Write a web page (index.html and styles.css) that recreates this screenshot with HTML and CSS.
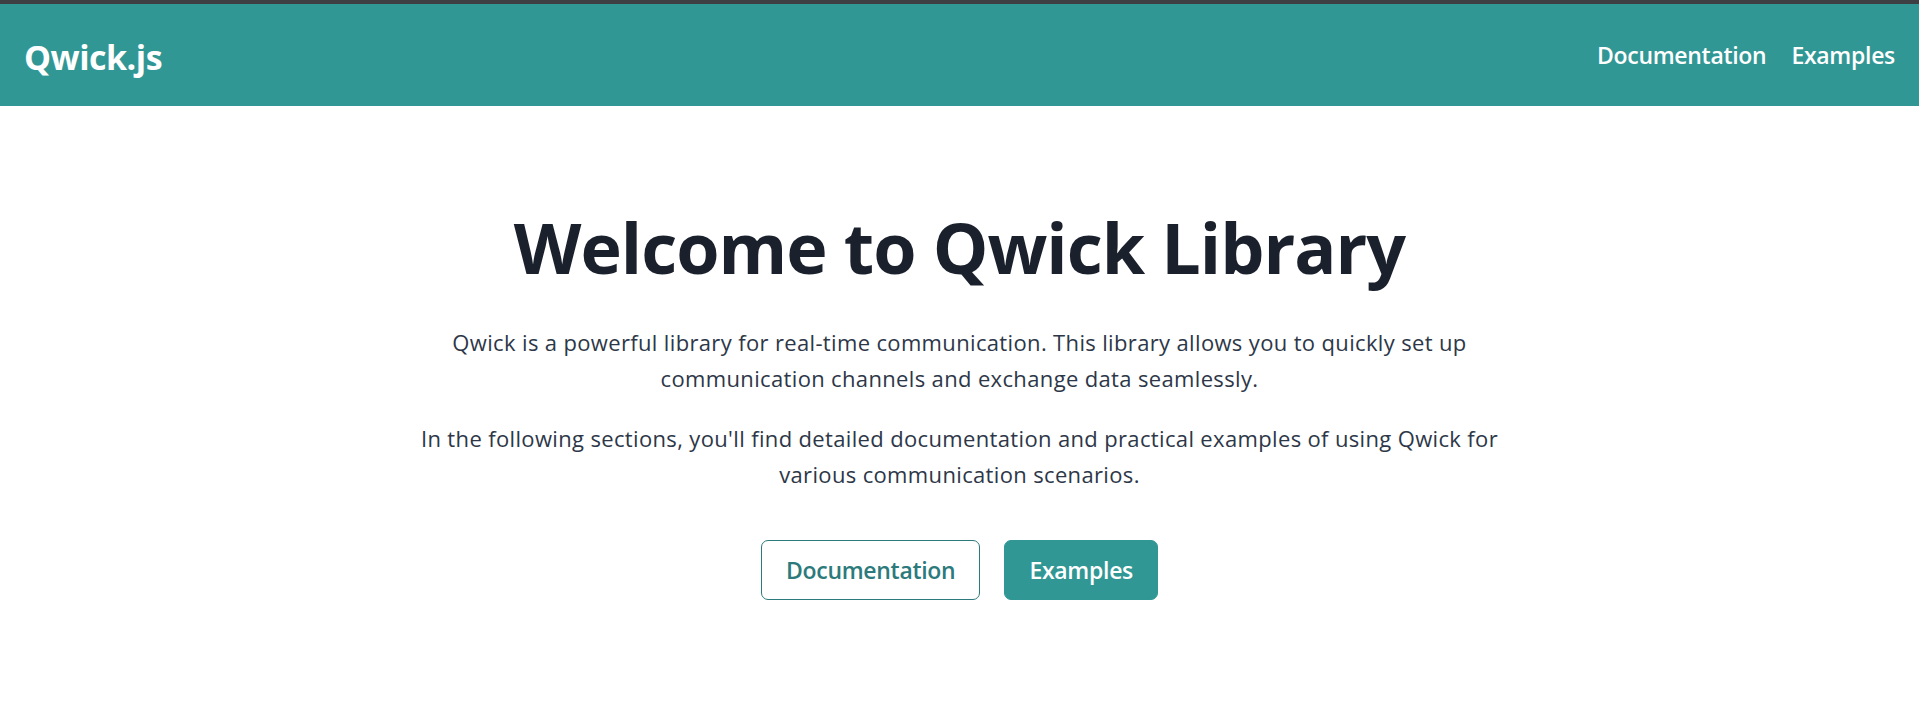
FILE: index.html
```html
<!DOCTYPE html>
<html lang="en">
<head>
<meta charset="utf-8">
<title>Qwick.js</title>
<link rel="stylesheet" href="styles.css">
</head>
<body>
<div class="topline"></div>
<header class="header">
  <a class="logo" href="#">Qwick.js</a>
  <nav class="nav">
    <a href="#">Documentation</a>
    <a href="#">Examples</a>
  </nav>
</header>
<main class="hero">
  <h1 class="title">Welcome to Qwick Library</h1>
  <p class="lead">Qwick is a powerful library for real-time communication. This library allows you to quickly set up communication channels and exchange data seamlessly.</p>
  <p class="lead second">In the following sections, you'll find detailed documentation and practical examples of using Qwick for various communication scenarios.</p>
  <div class="actions">
    <a class="btn btn-outline" href="#">Documentation</a>
    <a class="btn btn-solid" href="#">Examples</a>
  </div>
</main>
</body>
</html>
```
FILE: styles.css
```css
* { box-sizing: border-box; }
html, body { margin: 0; padding: 0; background: #ffffff; }
body { font-family: "Open Sans", "Noto Sans", sans-serif; }
a { text-decoration: none; }

.topline { height: 4px; background: #3e3f43; }

.header {
  height: 102px;
  background: #319795;
  display: flex;
  align-items: center;
  justify-content: space-between;
  padding: 0 24px;
}
.logo {
  color: #ffffff;
  font-weight: 700;
  font-size: 34px;
  letter-spacing: -0.5px;
  line-height: 40px;
  padding-top: 4px;
}
.nav { display: flex; gap: 25px; }
.nav a {
  color: #ffffff;
  font-weight: 600;
  font-size: 23px;
  letter-spacing: -0.3px;
  line-height: 32px;
}

.hero {
  text-align: center;
  padding-top: 106px;
  display: flex;
  flex-direction: column;
  align-items: center;
}
.title {
  margin: 0;
  font-size: 70px;
  line-height: 70px;
  font-weight: 700;
  letter-spacing: -1px;
  color: #1a202c;
}
.lead {
  margin: 43px 0 0;
  max-width: 1105px;
  font-size: 22px;
  letter-spacing: 0.35px;
  line-height: 35.5px;
  color: #2d3748;
}
.lead.second { margin-top: 25px; }

.actions {
  margin-top: 48px;
  display: flex;
  gap: 24px;
}
.btn {
  display: block;
  height: 60px;
  padding: 11px 24px;
  border-radius: 7px;
  border: 1px solid #2c7a7b;
  font-weight: 600;
  font-size: 23px;
  letter-spacing: -0.3px;
  line-height: 36px;
}
.btn-outline { background: #ffffff; color: #2c7a7b; }
.btn-solid { background: #319795; border-color: #319795; color: #ffffff; }
```
